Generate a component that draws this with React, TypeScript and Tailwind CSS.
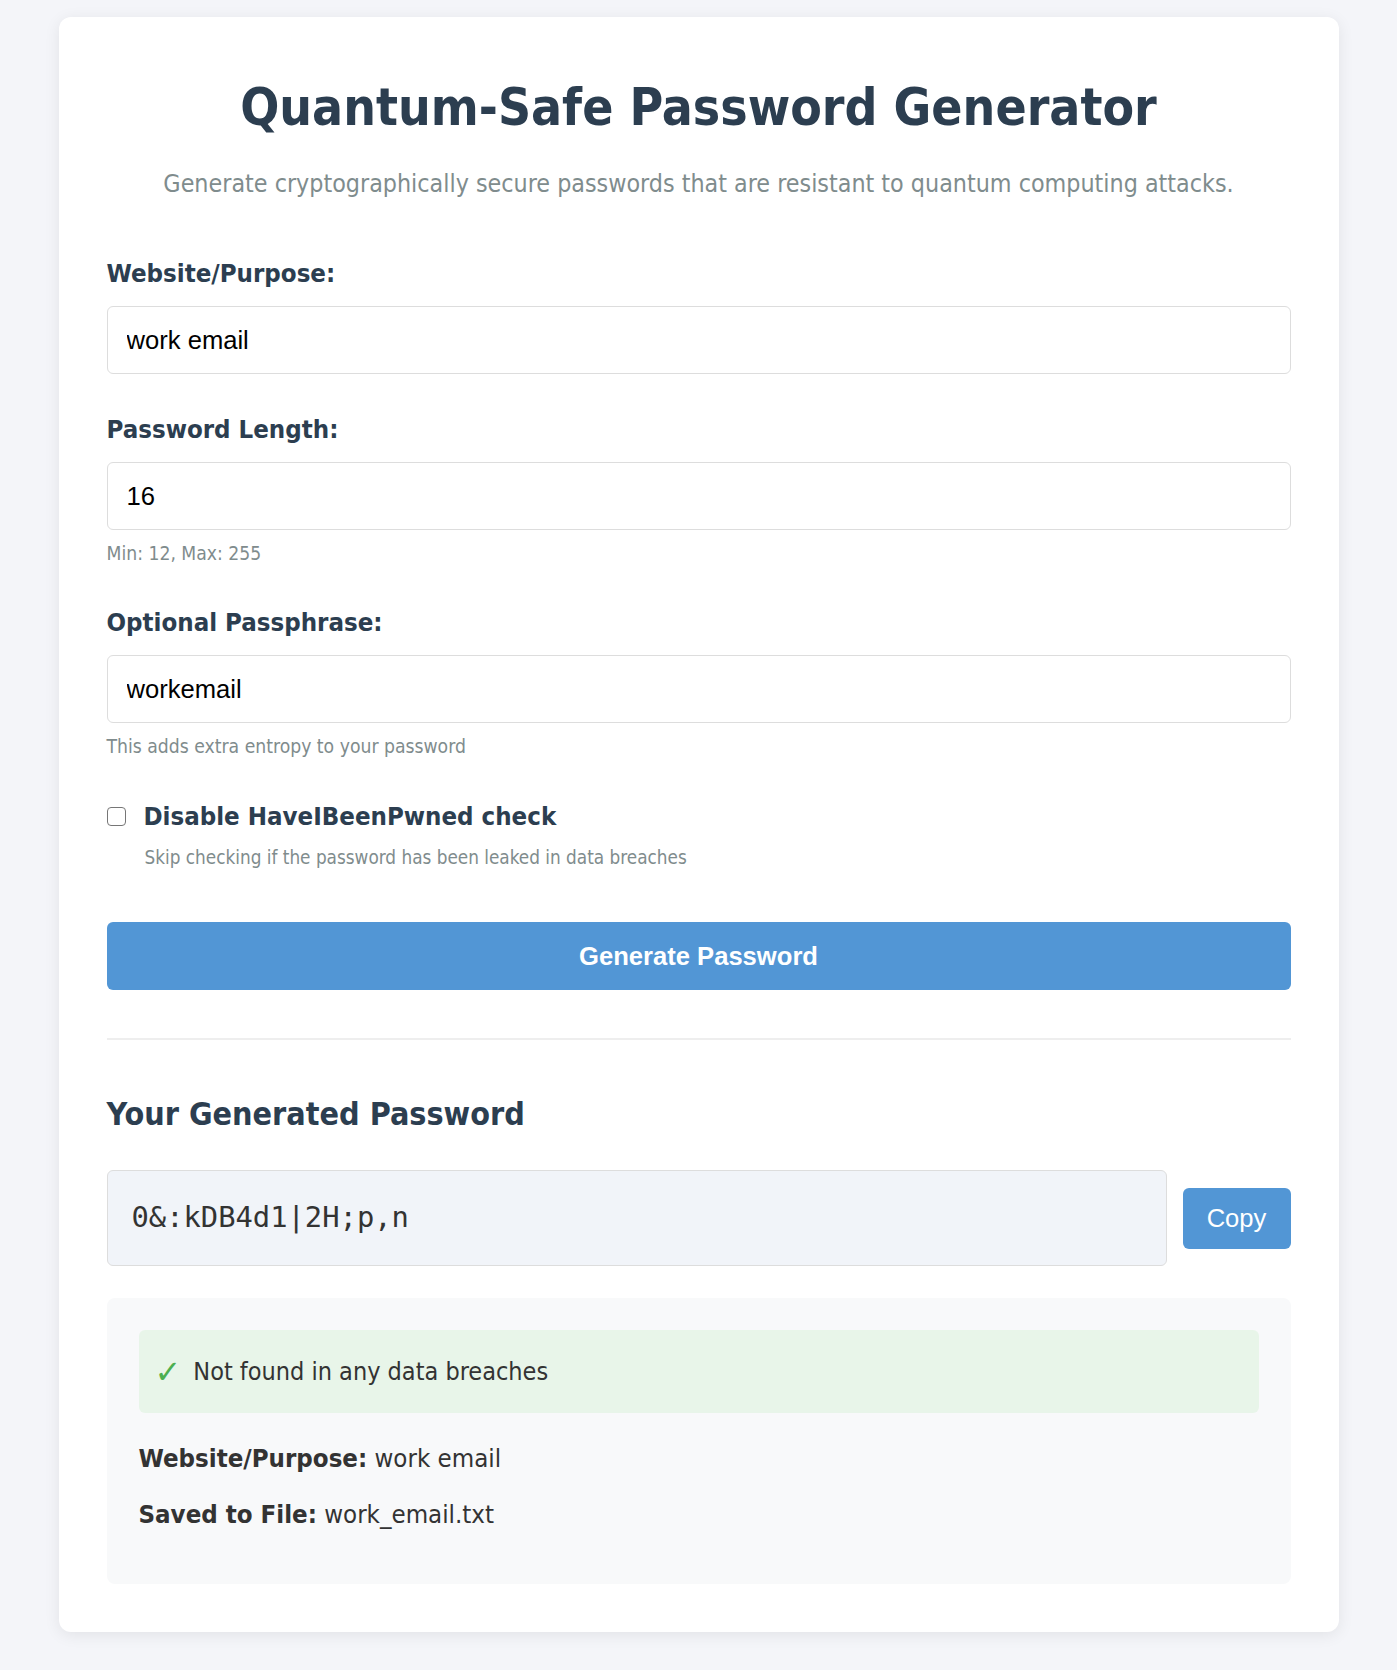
import React from 'react';

const tahoma = "font-['DejaVu_Sans_Condensed','DejaVu_Sans',sans-serif]";
const arial = "font-['Liberation_Sans',Arial,sans-serif]";

function Field({ label, value, hint }: { label: string; value: string; hint?: string }) {
  return (
    <div className="flex flex-col">
      <label className={`${tahoma} text-[25.6px] leading-[30px] font-bold text-[#2c3e50]`}>{label}</label>
      <input
        readOnly
        value={value}
        className={`${arial} mt-[18px] h-[68px] w-full rounded-[6px] border border-[#dddddd] bg-white pl-[19px] text-[25.6px] text-black outline-none`}
      />
      {hint && (
        <p className={`${tahoma} mt-[12px] text-[19.2px] leading-[24px] text-[#7f8c8d]`}>{hint}</p>
      )}
    </div>
  );
}

export default function App() {
  return (
    <div className="min-h-[1670px] w-full bg-[#f4f5f9] pt-[17px] pb-[40px]">
      <div className="mx-auto w-[1280px] rounded-[12px] bg-white px-[48px] pt-[48px] pb-[48px] shadow-[0_3px_16px_rgba(0,0,0,0.08)]">
        <h1 className={`${tahoma} mt-[12px] text-center text-[51.2px] leading-[60px] font-bold text-[#2c3e50]`}>
          Quantum-Safe Password Generator
        </h1>
        <p className={`${tahoma} mt-[30px] text-center text-[24.8px] leading-[34px] text-[#7f8c8d]`}>
          Generate cryptographically secure passwords that are resistant to quantum computing attacks.
        </p>

        <div className="mt-[57px] flex flex-col">
          <Field label="Website/Purpose:" value="work email" />
          <div className="mt-[40px]">
            <Field label="Password Length:" value="16" hint="Min: 12, Max: 255" />
          </div>
          <div className="mt-[41px]">
            <Field label="Optional Passphrase:" value="workemail" hint="This adds extra entropy to your password" />
          </div>

          <div className="mt-[41px] flex items-center gap-[18px]">
            <span className="h-[19px] w-[19px] rounded-[4px] border-[1.6px] border-[#767676] bg-white" />
            <span className={`${tahoma} text-[25.6px] leading-[32px] font-bold text-[#2c3e50]`}>
              Disable HaveIBeenPwned check
            </span>
          </div>
          <p className={`${tahoma} mt-[14px] pl-[38px] text-[18.8px] leading-[24px] text-[#7f8c8d]`}>
            Skip checking if the password has been leaked in data breaches
          </p>

          <button
            className={`${arial} mt-[52px] h-[68px] w-full rounded-[6px] bg-[#5296d5] text-[25.6px] font-bold text-white`}
          >
            Generate Password
          </button>
        </div>

        <div className="mt-[48px] h-[2px] w-full bg-[#eeeeee]" />

        <h2 className={`${tahoma} mt-[54px] text-[32px] leading-[40px] font-bold text-[#2c3e50]`}>
          Your Generated Password
        </h2>

        <div className="mt-[36px] flex items-center gap-[16px]">
          <div className="flex h-[96px] flex-1 items-center rounded-[6px] border border-[#dddddd] bg-[#f1f4f9] pl-[24px]">
            <span className="font-['DejaVu_Sans_Mono',monospace] text-[28.8px] text-[#333333]">0&amp;:kDB4d1|2H;p,n</span>
          </div>
          <button className={`${arial} h-[61px] w-[108px] rounded-[6px] bg-[#5296d5] text-[25.6px] text-white`}>
            Copy
          </button>
        </div>

        <div className="mt-[32px] rounded-[8px] bg-[#f8f9fa] px-[32px] pt-[32px] pb-[55px]">
          <div className="flex h-[83px] items-center gap-[12px] rounded-[6px] bg-[#e8f5e9] pl-[16px]">
            <span className="font-['DejaVu_Sans',sans-serif] text-[32px] leading-[32px] text-[#4caf50]">✓</span>
            <span className={`${tahoma} text-[25px] leading-[30px] text-[#333333]`}>Not found in any data breaches</span>
          </div>
          <p className={`${tahoma} mt-[30px] text-[25.6px] leading-[30px] text-[#333333]`}>
            <strong className="font-bold">Website/Purpose:</strong> work email
          </p>
          <p className={`${tahoma} mt-[26px] text-[25.6px] leading-[30px] text-[#333333]`}>
            <strong className="font-bold">Saved to File:</strong> work_email.txt
          </p>
        </div>
      </div>
    </div>
  );
}
